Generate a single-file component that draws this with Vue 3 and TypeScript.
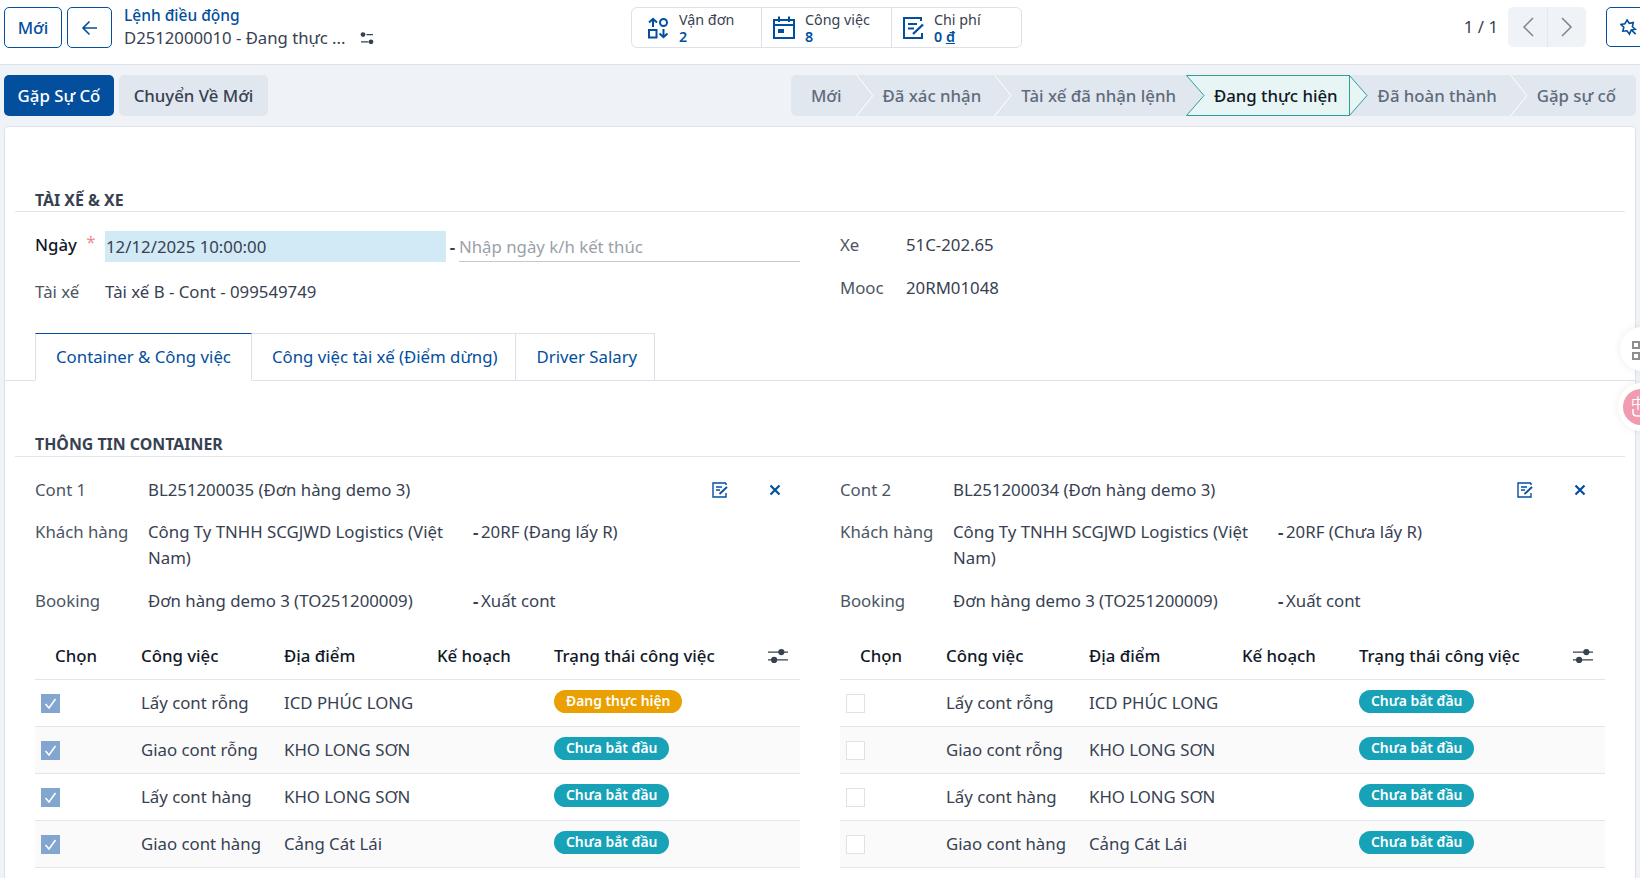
<script setup lang="ts">
type Job = { name: string; place: string; status: string; running?: boolean }
type Cont = { label: string; bl: string; kind: string; type: string; checked: boolean; jobs: Job[] }

const steps = ['Mới', 'Đã xác nhận', 'Tài xế đã nhận lệnh', 'Đang thực hiện', 'Đã hoàn thành', 'Gặp sự cố']
const activeStep = 3

const tabs = ['Container & Công việc', 'Công việc tài xế (Điểm dừng)', 'Driver Salary']

const headers = ['Chọn', 'Công việc', 'Địa điểm', 'Kế hoạch', 'Trạng thái công việc']

const waiting = 'Chưa bắt đầu'

const containers: Cont[] = [
  {
    label: 'Cont 1',
    bl: 'BL251200035 (Đơn hàng demo 3)',
    kind: '20RF (Đang lấy R)',
    type: 'Xuất cont',
    checked: true,
    jobs: [
      { name: 'Lấy cont rỗng', place: 'ICD PHÚC LONG', status: 'Đang thực hiện', running: true },
      { name: 'Giao cont rỗng', place: 'KHO LONG SƠN', status: waiting },
      { name: 'Lấy cont hàng', place: 'KHO LONG SƠN', status: waiting },
      { name: 'Giao cont hàng', place: 'Cảng Cát Lái', status: waiting },
    ],
  },
  {
    label: 'Cont 2',
    bl: 'BL251200034 (Đơn hàng demo 3)',
    kind: '20RF (Chưa lấy R)',
    type: 'Xuất cont',
    checked: false,
    jobs: [
      { name: 'Lấy cont rỗng', place: 'ICD PHÚC LONG', status: waiting },
      { name: 'Giao cont rỗng', place: 'KHO LONG SƠN', status: waiting },
      { name: 'Lấy cont hàng', place: 'KHO LONG SƠN', status: waiting },
      { name: 'Giao cont hàng', place: 'Cảng Cát Lái', status: waiting },
    ],
  },
]
</script>

<template>
  <div class="page">
    <!-- top bar -->
    <header class="topbar">
      <div class="top-left">
        <button class="btn-outline btn-new">Mới</button>
        <button class="btn-outline btn-back">
          <svg width="18" height="18" viewBox="0 0 18 18" fill="none" stroke="#034f9e" stroke-width="1.6">
            <path d="M16 9H2.500M8.500 2.500 2 9l6.500 6.500" />
          </svg>
        </button>
        <div class="crumb">
          <div class="crumb-title">Lệnh điều động</div>
          <div class="crumb-sub">
            <span>D2512000010 - Đang thực ...</span>
            <svg class="crumb-icon" width="14" height="13" viewBox="0 0 14 13">
              <circle cx="3" cy="2.600" r="2.400" fill="#374151" />
              <path d="M6.500 2.600H13M1 9.800h7.500" stroke="#374151" stroke-width="1.200" />
              <circle cx="11" cy="9.800" r="2.400" fill="#374151" />
            </svg>
          </div>
        </div>
      </div>

      <div class="stats">
        <div class="stat">
          <svg width="22" height="22" viewBox="0 0 22 22" fill="none" stroke="#034f9e" stroke-width="2">
            <path d="M6 10V2M2 5.500 6 1.800l4 3.700" />
            <circle cx="16.500" cy="5.500" r="3.500" />
            <rect x="2" y="13" width="7.500" height="7.500" />
            <path d="M16.500 12v8M12.500 16.500l4 3.700 4-3.700" />
          </svg>
          <div class="stat-text">
            <span class="stat-label">Vận đơn</span>
            <span class="stat-value">2</span>
          </div>
        </div>
        <div class="stat">
          <svg width="22" height="23" viewBox="0 0 22 23" fill="none" stroke="#034f9e" stroke-width="2">
            <rect x="1" y="4" width="20" height="18" />
            <path d="M1 9h20M6 0.500V6M16 0.500V6" />
            <rect x="5" y="13" width="6" height="4" fill="#034f9e" stroke="none" />
          </svg>
          <div class="stat-text">
            <span class="stat-label">Công việc</span>
            <span class="stat-value">8</span>
          </div>
        </div>
        <div class="stat">
          <svg width="21" height="22" viewBox="0 0 21 22" fill="none" stroke="#034f9e" stroke-width="2">
            <path d="M19 1H1v20h18v-5M18 1v3" />
            <path d="M5 7h9M5 11.500h6" />
            <path d="M10 17 20 7.500" stroke-width="2.400" />
          </svg>
          <div class="stat-text">
            <span class="stat-label">Chi phí</span>
            <span class="stat-value">0 <u>đ</u></span>
          </div>
        </div>
      </div>

      <div class="top-right">
        <span class="pager-text">1 / 1</span>
        <div class="pager">
          <button class="pager-btn">
            <svg width="12" height="20" viewBox="0 0 12 20" fill="none" stroke="#7b8490" stroke-width="1.500">
              <path d="M11 1 2 10l9 9" />
            </svg>
          </button>
          <button class="pager-btn">
            <svg width="12" height="20" viewBox="0 0 12 20" fill="none" stroke="#7b8490" stroke-width="1.500">
              <path d="m1 1 9 9-9 9" />
            </svg>
          </button>
        </div>
        <button class="btn-outline btn-pin">
          <svg width="18" height="17" viewBox="0 0 19 18" fill="none" stroke="#034f9e" stroke-width="1.700">
            <path d="m7.500 1 2.300 3.600 4.200-.8-.9 4.400 3 2.600-4.200.8L10 16l-2.600-3.500-4.400.4 1-4.200L1 5.800 5.200 5z" />
            <path d="m12 11.500 4.500 4.500" />
          </svg>
        </button>
      </div>
    </header>

    <!-- action bar + status steps -->
    <div class="actionbar">
      <div class="actions">
        <button class="btn-primary">Gặp Sự Cố</button>
        <button class="btn-secondary">Chuyển Về Mới</button>
      </div>
      <div class="steps">
        <div
          v-for="(step, i) in steps"
          :key="step"
          class="step"
          :class="{ active: i === activeStep }"
        >
          <svg v-if="i === activeStep" class="step-shape" width="182" height="41" viewBox="0 0 182 41">
            <path d="M0.500 .5H163.500L181 20.500 163.500 40.500H.5L18 20.500Z" fill="#e8f5f5" stroke="#2f9e98" />
            <path d="M163.500 .5V40.500" stroke="#2f9e98" />
          </svg>
          <svg
            v-else-if="i < steps.length - 1 && i !== activeStep - 1"
            class="step-chevron"
            width="18"
            height="41"
            viewBox="0 0 18 41"
            fill="none"
            stroke="#fff"
          >
            <path d="M.5 0 17 20.500.5 41" />
          </svg>
          <span class="step-text">{{ step }}</span>
        </div>
      </div>
    </div>

    <!-- form sheet -->
    <main class="sheet">
      <h3 class="section first">Tài xế &amp; Xe</h3>
      <div class="columns driver">
        <div>
          <div class="field-date">
            <label class="label-strong">Ngày <em>*</em></label>
            <div class="date-from">12/12/2025 10:00:00</div>
            <span class="dash">-</span>
            <div class="date-to">Nhập ngày k/h kết thúc</div>
          </div>
          <div class="field-driver">
            <label>Tài xế</label>
            <span>Tài xế B - Cont - 099549749</span>
          </div>
        </div>
        <div>
          <div class="field-car"><label>Xe</label><span>51C-202.65</span></div>
          <div class="field-car mooc"><label>Mooc</label><span>20RM01048</span></div>
        </div>
      </div>

      <div class="tabs">
        <a v-for="(tab, i) in tabs" :key="tab" class="tab" :class="{ active: i === 0 }">{{ tab }}</a>
      </div>

      <h3 class="section second">Thông tin container</h3>
      <div class="columns">
        <section v-for="c in containers" :key="c.label">
          <div class="info first-info">
            <label>{{ c.label }}</label>
            <span>{{ c.bl }}</span>
            <div class="info-icons">
              <svg width="16" height="16" viewBox="0 0 16 16" fill="none" stroke="#034f9e" stroke-width="1.400">
                <path d="M14 1H1v14h13v-4M14 1v2" />
                <path d="M4 5h6M4 8h4" />
                <path d="m7.500 12 7.500-7" stroke-width="1.800" />
              </svg>
              <svg width="12" height="12" viewBox="0 0 12 12" fill="none" stroke="#034f9e" stroke-width="2.200">
                <path d="m1.500 1.500 9 9M10.500 1.500l-9 9" />
              </svg>
            </div>
          </div>
          <div class="info second-info">
            <label>Khách hàng</label>
            <span>Công Ty TNHH SCGJWD Logistics (Việt Nam)</span>
            <div class="info-extra"><b>-</b><span>{{ c.kind }}</span></div>
          </div>
          <div class="info third-info">
            <label>Booking</label>
            <span>Đơn hàng demo 3 (TO251200009)</span>
            <div class="info-extra"><b>-</b><span>{{ c.type }}</span></div>
          </div>

          <table class="jobs">
            <colgroup>
              <col style="width: 98px" />
              <col style="width: 143px" />
              <col style="width: 153px" />
              <col style="width: 117px" />
              <col />
            </colgroup>
            <thead>
              <tr>
                <th v-for="h in headers" :key="h">{{ h }}</th>
              </tr>
            </thead>
            <tbody>
              <tr v-for="job in c.jobs" :key="job.name">
                <td>
                  <span class="check" :class="{ on: c.checked }">
                    <svg v-if="c.checked" width="19" height="19" viewBox="0 0 19 19" fill="none" stroke="#fff" stroke-width="1.600">
                      <path d="m4.500 10 3.500 4 6.500-9" />
                    </svg>
                  </span>
                </td>
                <td>{{ job.name }}</td>
                <td>{{ job.place }}</td>
                <td></td>
                <td>
                  <span class="badge" :class="{ running: job.running }">{{ job.status }}</span>
                </td>
              </tr>
            </tbody>
          </table>
          <svg class="col-toggle" width="20" height="18" viewBox="0 0 18 16" fill="none">
            <path d="M0 4.500h18M0 11.500h18" stroke="#374151" stroke-width="1.300" />
            <circle cx="12" cy="4.500" r="2.800" fill="#374151" />
            <circle cx="5.500" cy="11.500" r="2.800" fill="#374151" />
          </svg>
        </section>
      </div>
    </main>

    <!-- floating widgets at the window edge -->
    <div class="float float-apps">
      <span class="app-grid"><i></i><i></i><i></i><i></i></span>
    </div>
    <div class="float float-lang">
      <span class="lang-dot">
        <span class="lang-text">中</span>
        <svg class="lang-curve" width="10" height="8" viewBox="0 0 10 8" fill="none" stroke="#fff" stroke-width="1.600">
          <path d="M1 0v3.500C1 6 3 7 5 7h4" />
        </svg>
      </span>
    </div>
  </div>
</template>

<style>
html,
body {
  margin: 0;
  overflow: hidden;
}
</style>

<style scoped>
.page {
  position: relative;
  height: 878px;
  overflow: hidden;
  background: #eff3f8;
  font-family: "Noto Sans", sans-serif;
  font-size: 16.800px;
  line-height: 22px;
  color: #374151;
}

button {
  font-family: inherit;
  cursor: pointer;
}

.topbar {
  display: flex;
  align-items: flex-start;
  height: 64px;
  padding: 0 0 0 4px;
  background: #fff;
  border-bottom: 1px solid #dde2ea;
}

.top-left {
  display: flex;
  align-items: flex-start;
  width: 627px;
  flex: none;
  padding-top: 7px;
}

.btn-outline {
  height: 41px;
  background: #fff;
  border: 1px solid #034f9e;
  border-radius: 5px;
  color: #034f9e;
  font-size: 16.800px;
  font-weight: 500;
  padding: 0;
  display: flex;
  align-items: center;
  justify-content: center;
}

.btn-new {
  width: 58px;
}

.btn-back {
  width: 45px;
  margin-left: 5px;
}

.crumb {
  margin: -2px 0 0 12px;
}

.crumb-title {
  font-size: 15.500px;
  line-height: 20px;
  color: #034f9e;
  font-weight: 500;
}

.crumb-sub {
  display: flex;
  align-items: center;
  font-size: 16.700px;
  line-height: 24px;
  margin-top: 1px;
}

.crumb-icon {
  margin-left: 14px;
}

.stats {
  display: flex;
  flex: none;
  height: 39px;
  margin-top: 7px;
  background: #fff;
  border: 1px solid #dde2ea;
  border-radius: 6px;
}

.stat {
  width: 130px;
  display: flex;
  align-items: center;
  padding-left: 11px;
  box-sizing: border-box;
  border-left: 1px solid #dde2ea;
}

.stat:first-child {
  border-left: 0;
  width: 129px;
  padding-left: 15px;
}

.stat-text {
  display: flex;
  flex-direction: column;
  margin-left: 10px;
  font-size: 14.300px;
  line-height: 17px;
}

.stat-value {
  color: #034f9e;
  font-weight: 600;
}

.top-right {
  display: flex;
  align-items: center;
  margin-left: auto;
  margin-right: -12px;
  margin-top: 7px;
  flex: none;
}

.pager-text {
  margin-right: 10px;
}

.pager {
  display: flex;
  height: 40px;
  border-radius: 5px;
  overflow: hidden;
  background: #eff3f8;
}

.pager-btn {
  width: 39px;
  background: none;
  border: 0;
  padding: 0;
  display: flex;
  align-items: center;
  justify-content: center;
}

.pager-btn + .pager-btn {
  border-left: 1px solid #e4e8ee;
}

.btn-pin {
  width: 46px;
  margin-left: 20px;
  height: 40px;
}

.actionbar {
  display: flex;
  align-items: center;
  justify-content: space-between;
  padding: 10px 4px;
}

.actions {
  display: flex;
  gap: 5px;
}

.btn-primary,
.btn-secondary {
  height: 41px;
  border: 0;
  border-radius: 5px;
  font-size: 16.800px;
  font-weight: 500;
  padding: 0 10px;
}

.btn-primary {
  width: 110px;
  background: #034f9e;
  color: #fff;
}

.btn-secondary {
  width: 149px;
  background: #e1e7ef;
  color: #374151;
}

.steps {
  display: flex;
  height: 41px;
  background: #e1e7ef;
  border-radius: 5px;
}

.step {
  position: relative;
  display: flex;
  align-items: center;
  padding: 0 14px 0 27px;
  color: #5f6b7c;
  font-weight: 500;
  white-space: nowrap;
}

.step:first-child {
  padding-left: 20px;
}

.step:nth-child(2) {
  padding-right: 13px;
}

.step:nth-child(3) {
  padding-right: 10px;
}

.step:nth-child(5) {
  padding-right: 13px;
}

.step:last-child {
  padding-right: 20px;
}

.step.active {
  color: #111827;
  padding: 0 13px 0 28px;
  z-index: 1;
}

.step-text {
  position: relative;
}

.step-chevron {
  position: absolute;
  left: 100%;
  top: 0;
  z-index: 1;
}

.step-shape {
  position: absolute;
  left: 0;
  top: 0;
}

.sheet {
  margin-left: 4px;
  width: 1632px;
  box-sizing: border-box;
  height: 800px;
  background: #fff;
  border: 1px solid #dde2ea;
  border-radius: 4px 4px 0 0;
  padding: 0 30px;
}

.section {
  margin: 0 -20px;
  padding: 0 20px;
  font-size: 15.900px;
  line-height: 22px;
  font-weight: 700;
  color: #374151;
  text-transform: uppercase;
  border-bottom: 1px solid #e2e5ea;
}

.section.first {
  margin-top: 62px;
}

.section.second {
  margin-top: 52px;
  padding-bottom: 1px;
}

.columns {
  display: grid;
  grid-template-columns: 765px 765px;
  gap: 40px;
}

label {
  color: #4b5563;
}

.driver {
  margin-top: 19px;
}

.field-date {
  display: flex;
  align-items: center;
  height: 31px;
}

.label-strong {
  width: 70px;
  color: #111827;
  font-weight: 500;
  margin-top: -3px;
}

.label-strong em {
  color: #ee8a8a;
  font-style: normal;
  font-weight: 400;
  margin-left: 5px;
  position: relative;
  top: -3px;
}

.date-from {
  width: 341px;
  height: 31px;
  line-height: 31px;
  background: #d2e9f6;
  padding-left: 1px;
  box-sizing: border-box;
}

.dash {
  width: 13px;
  text-align: center;
  font-weight: 700;
}

.date-to {
  width: 341px;
  height: 31px;
  line-height: 31px;
  box-sizing: border-box;
  color: #9aa1ab;
  border-bottom: 1px solid #c5c9cf;
}

.field-driver {
  display: flex;
  margin-top: 19px;
}

.field-driver label {
  width: 70px;
}

.field-car {
  display: flex;
  height: 22px;
  margin-top: 3px;
}

.field-car.mooc {
  margin-top: 21px;
}

.field-car label {
  width: 66px;
}

.tabs {
  display: flex;
  margin: 30px -30px 0;
  padding-left: 30px;
  border-bottom: 1px solid #dde2ea;
  height: 47px;
}

.tab {
  display: flex;
  align-items: center;
  box-sizing: border-box;
  height: 48px;
  padding: 0 18px 0 20px;
  color: #034f9e;
  border: 1px solid #dde2ea;
  border-left: 0;
}

.tab:last-child {
  padding-right: 17px;
}

.tab.active {
  padding: 0 20px;
  border-left: 1px solid #dde2ea;
  border-top: 1px solid #034f9e;
  border-bottom-color: #fff;
}

section {
  position: relative;
}

.info {
  display: grid;
  grid-template-columns: 113px 305px 1fr;
  align-items: start;
}

.first-info {
  margin-top: 22px;
}

.second-info {
  margin-top: 18px;
  line-height: 26px;
}

.third-info {
  margin-top: 19px;
}

.info-icons {
  display: flex;
  align-items: center;
  justify-content: flex-end;
  gap: 41px;
  padding: 3px 19px 0 0;
}

.info-extra {
  display: flex;
  padding-left: 20px;
}

.info-extra b {
  width: 8px;
}

.jobs {
  width: 765px;
  margin-top: 20px;
  border-collapse: collapse;
  table-layout: fixed;
}

.jobs th {
  height: 47px;
  padding: 0 8px;
  text-align: left;
  font-weight: 500;
  color: #111827;
  border-bottom: 1px solid #e2e5ea;
  white-space: nowrap;
}

.jobs th:first-child {
  padding-left: 20px;
}

.jobs td {
  height: 46px;
  padding: 0 8px;
  border-bottom: 1px solid #e2e5ea;
  white-space: nowrap;
}

.jobs tbody tr:nth-child(even) {
  background: #fafafb;
}

.jobs td:first-child {
  padding-left: 6px;
}

.check {
  display: block;
  width: 19px;
  height: 19px;
  box-sizing: border-box;
  border: 1px solid #dfe2e6;
  background: #fff;
}

.check.on {
  border: 0;
  background: #82a6cf;
}

.badge {
  display: inline-block;
  padding: 0 12px;
  height: 23px;
  line-height: 22px;
  border-radius: 12px;
  background: #17a2b8;
  color: #fff;
  font-size: 13.900px;
  font-weight: 600;
  vertical-align: middle;
  margin-bottom: 4px;
}

.badge.running {
  background: #e9a000;
}

.col-toggle {
  position: absolute;
  right: 12px;
  top: 190px;
}

.float {
  position: absolute;
  left: 1620px;
  width: 44px;
  height: 44px;
  border-radius: 50%;
  background: #fff;
  box-shadow: 0 0 8px rgba(0, 0, 0, 0.08);
}

.float-apps {
  top: 327px;
}

.app-grid {
  position: absolute;
  left: 12px;
  top: 14px;
  display: grid;
  grid-template-columns: 8px 8px;
  gap: 3px;
}

.app-grid i {
  display: block;
  width: 8px;
  height: 8px;
  box-sizing: border-box;
  border: 2px solid #8e8e8e;
}

.float-lang {
  top: 383px;
  left: 1618px;
  width: 48px;
  height: 48px;
}

.lang-dot {
  position: absolute;
  left: 5px;
  top: 6px;
  width: 36px;
  height: 36px;
  border-radius: 50%;
  background: #f19ab0;
}

.lang-text {
  position: absolute;
  left: 8px;
  top: 6px;
  color: #fff;
  font-family: "Noto Sans CJK SC", sans-serif;
  font-size: 14px;
  line-height: 14px;
}

.lang-curve {
  position: absolute;
  left: 9px;
  top: 20px;
}
</style>
